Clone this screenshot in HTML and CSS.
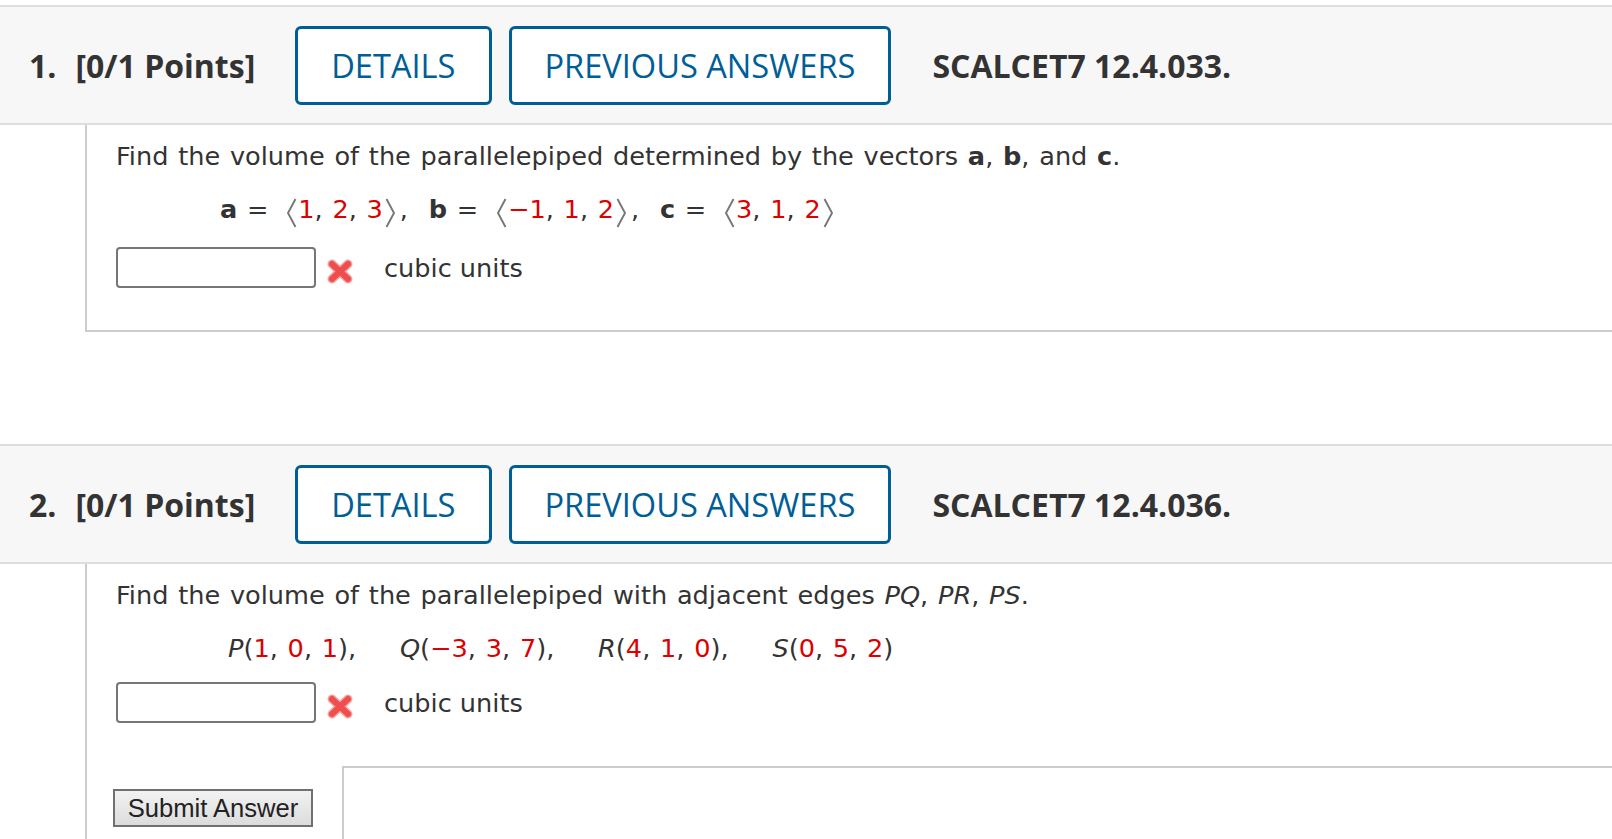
FILE: index.html
```html
<!DOCTYPE html>
<html>
<head>
<meta charset="utf-8">
<link rel="stylesheet" href="styles.css">
</head>
<body>
<div class="question q1">
  <div class="qhead">
    <span class="qnum">1.</span>
    <span class="qpts">[0/1 Points]</span>
    <button class="hbtn details">DETAILS</button>
    <button class="hbtn prev">PREVIOUS ANSWERS</button>
    <span class="qref">SCALCET7 12.4.033.</span>
  </div>
  <div class="qbody">
    <p class="line">Find the volume of the parallelepiped determined by the vectors <b>a</b>, <b>b</b>, and <b>c</b>.</p>
    <p class="line math vecrow">
      <span class="vec"><b>a</b> = <svg class="br bro" width="14" height="30" viewBox="0 0 14 30"><polyline points="11.5,1 4,15 11.5,29"/></svg><span class="n">1</span>, <span class="n">2</span>, <span class="n">3</span><svg class="br brc" width="14" height="30" viewBox="0 0 14 30"><polyline points="2.5,1 10,15 2.5,29"/></svg>,</span>
      <span class="vec"><b>b</b> = <svg class="br bro" width="14" height="30" viewBox="0 0 14 30"><polyline points="11.5,1 4,15 11.5,29"/></svg><span class="n">−1</span>, <span class="n">1</span>, <span class="n">2</span><svg class="br brc" width="14" height="30" viewBox="0 0 14 30"><polyline points="2.5,1 10,15 2.5,29"/></svg>,</span>
      <span class="vec"><b>c</b> = <svg class="br bro" width="14" height="30" viewBox="0 0 14 30"><polyline points="11.5,1 4,15 11.5,29"/></svg><span class="n">3</span>, <span class="n">1</span>, <span class="n">2</span><svg class="br brc" width="14" height="30" viewBox="0 0 14 30"><polyline points="2.5,1 10,15 2.5,29"/></svg></span>
    </p>
    <div class="answer">
      <input class="ans" type="text">
      <svg class="xmark" width="28" height="27" viewBox="0 0 28 27"><line class="xs" x1="6" y1="6" x2="22" y2="21"/><line class="xs" x1="22" y1="6" x2="6" y2="21"/><line class="xc" x1="6" y1="6" x2="22" y2="21"/><line class="xc" x1="22" y1="6" x2="6" y2="21"/></svg>
      <span class="unit">cubic units</span>
    </div>
  </div>
</div>

<div class="question q2">
  <div class="qhead">
    <span class="qnum">2.</span>
    <span class="qpts">[0/1 Points]</span>
    <button class="hbtn details">DETAILS</button>
    <button class="hbtn prev">PREVIOUS ANSWERS</button>
    <span class="qref">SCALCET7 12.4.036.</span>
  </div>
  <div class="qbody open">
    <p class="line">Find the volume of the parallelepiped with adjacent edges <i>PQ</i>, <i>PR</i>, <i>PS</i>.</p>
    <p class="line math ptrow">
      <span class="pt"><i>P</i>(<span class="n">1</span>, <span class="n">0</span>, <span class="n">1</span>),</span>
      <span class="pt"><i>Q</i>(<span class="n">−3</span>, <span class="n">3</span>, <span class="n">7</span>),</span>
      <span class="pt"><i>R</i>(<span class="n">4</span>, <span class="n">1</span>, <span class="n">0</span>),</span>
      <span class="pt"><i>S</i>(<span class="n">0</span>, <span class="n">5</span>, <span class="n">2</span>)</span>
    </p>
    <div class="answer a2">
      <input class="ans" type="text">
      <svg class="xmark" width="28" height="27" viewBox="0 0 28 27"><line class="xs" x1="6" y1="6" x2="22" y2="21"/><line class="xs" x1="22" y1="6" x2="6" y2="21"/><line class="xc" x1="6" y1="6" x2="22" y2="21"/><line class="xc" x1="22" y1="6" x2="6" y2="21"/></svg>
      <span class="unit">cubic units</span>
    </div>
    <div class="submitrow">
      <button class="submit">Submit Answer</button>
      <div class="sidebox"></div>
    </div>
  </div>
</div>
</body>
</html>
```

FILE: styles.css
```css
html, body {
  margin: 0;
  padding: 0;
  background: #ffffff;
  overflow: hidden;
}
body {
  font-family: "DejaVu Sans", Verdana, sans-serif;
  color: #333333;
  width: 1612px;
  height: 839px;
}
.q1 {
  padding-top: 5px;
}
.q2 {
  margin-top: 112px;
}
.qhead {
  display: flex;
  align-items: center;
  height: 116px;
  background: #f7f7f7;
  border-top: 2px solid #dedede;
  border-bottom: 2px solid #dedede;
  padding-left: 29px;
  font-family: "Open Sans", sans-serif;
  font-size: 32px;
  color: #333333;
}
.qnum {
  font-weight: 700;
}
.qpts {
  font-weight: 700;
  margin-left: 19px;
}
.hbtn {
  font-family: "Open Sans", sans-serif;
  font-size: 32.6px;
  color: #005e96;
  background: #ffffff;
  border: 3px solid #005e96;
  border-radius: 6px;
  height: 79px;
  padding: 0 33px;
  margin: 0;
  box-sizing: border-box;
}
.details {
  margin-left: 40px;
}
.prev {
  margin-left: 17px;
}
.qref {
  font-weight: 700;
  margin-left: 41px;
}
.qbody {
  margin-left: 85px;
  border-left: 2px solid #cccccc;
  border-bottom: 2px solid #cccccc;
  padding: 12px 0 42px 29px;
  font-size: 25.6px;
  word-spacing: 1.6px;
}
.qbody.open {
  border-bottom: none;
  padding-bottom: 0;
  height: 263px;
}
.line {
  margin: 0;
  line-height: 38px;
  white-space: nowrap;
}
.math {
  margin-top: 15px;
}
.vecrow {
  padding-left: 104px;
}
.ptrow {
  padding-left: 112px;
}
.vec {
  margin-right: 11px;
}
.pt {
  margin-right: 34px;
}
.n {
  color: #dd0000;
}
.br {
  vertical-align: -10px;
}
.bro {
  margin: 0 0 0 6px;
}
.brc {
  margin: 0 2px 0 1px;
}
.br polyline {
  fill: none;
  stroke: #767676;
  stroke-width: 1.9;
}
.answer {
  display: flex;
  align-items: center;
  margin-top: 19px;
}
.answer.a2 {
  margin-top: 15px;
}
.ans {
  width: 200px;
  height: 41px;
  box-sizing: border-box;
  border: 2px solid #767676;
  border-radius: 4px;
  margin: 0;
  padding: 0;
  background: #ffffff;
}
.xmark {
  margin-left: 10px;
  margin-top: 7px;
}
.xs {
  stroke: #f7a3a3;
  stroke-width: 9;
  stroke-linecap: round;
}
.xc {
  stroke: #ef4e4e;
  stroke-width: 6;
  stroke-linecap: round;
}
.unit {
  margin-left: 30px;
  word-spacing: 0;
}
.submitrow {
  display: flex;
  align-items: flex-start;
  margin-top: 43px;
  margin-left: -3px;
}
.submit {
  margin: 23px 0 0 0;
  width: 200px;
  height: 38px;
  box-sizing: border-box;
  border: 2px solid #707070;
  background: linear-gradient(#f2f2f2, #dcdcdc);
  font-family: "Liberation Sans", Arial, sans-serif;
  font-size: 25.6px;
  word-spacing: 0;
  color: #222222;
  padding: 0;
}
.sidebox {
  flex: 1;
  margin-left: 29px;
  height: 71px;
  border-top: 2px solid #cccccc;
  border-left: 2px solid #cccccc;
}
```
